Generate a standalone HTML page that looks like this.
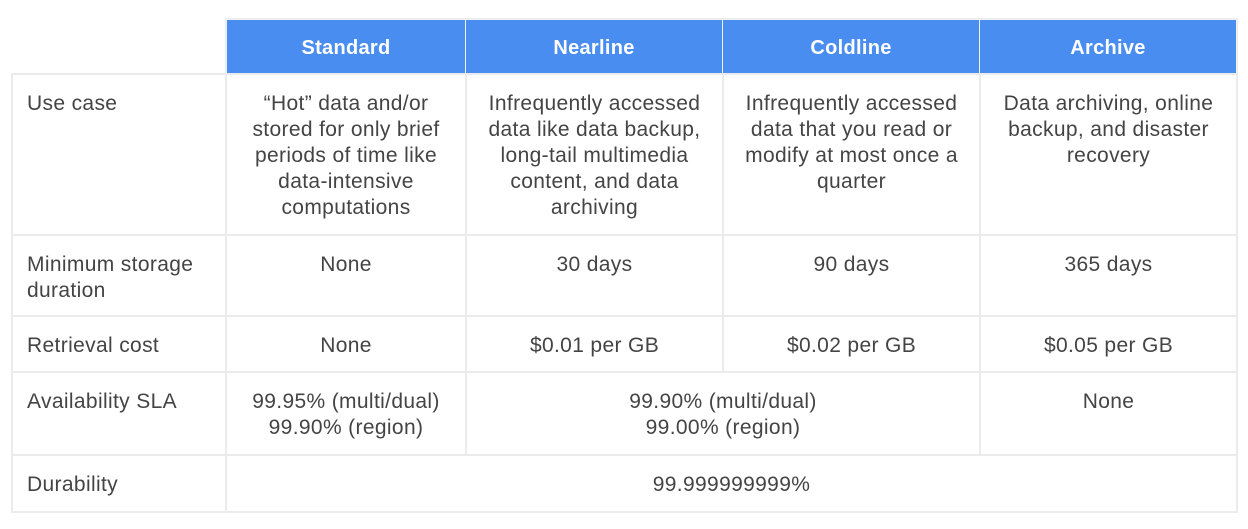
<!DOCTYPE html>
<html><head><style>
body{margin:0;width:1248px;height:529px;background:#fff;position:relative;overflow:hidden;font-family:"Liberation Sans",Arial,sans-serif;color:#444;}
.c{position:absolute;box-sizing:border-box;border:2px solid #ebebeb;font-size:21px;letter-spacing:0.35px;line-height:26px;padding-top:16px;text-align:center;}
.l{text-align:left;padding-left:14px;}
.h{position:absolute;box-sizing:border-box;background:#4a8df0;color:#fff;font-weight:bold;font-size:20px;letter-spacing:0.3px;text-align:center;line-height:56px;border:1px solid #f2f2f2;}
</style></head><body>
<div class="c" style="left:225px;top:18px;width:1013px;height:57px;padding:0"></div>
<div class="h" style="left:226px;top:19px;width:240px;height:55px">Standard</div>
<div class="h" style="left:465px;top:19px;width:258px;height:55px">Nearline</div>
<div class="h" style="left:722px;top:19px;width:258px;height:55px">Coldline</div>
<div class="h" style="left:979px;top:19px;width:258px;height:55px">Archive</div>

<div class="c l" style="left:11px;top:73px;width:216px;height:163px">Use case</div>
<div class="c" style="left:225px;top:73px;width:242px;height:163px">“Hot” data and/or<br>stored for only brief<br>periods of time like<br>data-intensive<br>computations</div>
<div class="c" style="left:465px;top:73px;width:259px;height:163px">Infrequently accessed<br>data like data backup,<br>long-tail multimedia<br>content, and data<br>archiving</div>
<div class="c" style="left:722px;top:73px;width:259px;height:163px">Infrequently accessed<br>data that you read or<br>modify at most once a<br>quarter</div>
<div class="c" style="left:979px;top:73px;width:259px;height:163px">Data archiving, online<br>backup, and disaster<br>recovery</div>

<div class="c l" style="left:11px;top:234px;width:216px;height:83px">Minimum storage<br>duration</div>
<div class="c" style="left:225px;top:234px;width:242px;height:83px">None</div>
<div class="c" style="left:465px;top:234px;width:259px;height:83px">30 days</div>
<div class="c" style="left:722px;top:234px;width:259px;height:83px">90 days</div>
<div class="c" style="left:979px;top:234px;width:259px;height:83px">365 days</div>

<div class="c l" style="left:11px;top:315px;width:216px;height:58px">Retrieval cost</div>
<div class="c" style="left:225px;top:315px;width:242px;height:58px">None</div>
<div class="c" style="left:465px;top:315px;width:259px;height:58px">$0.01 per GB</div>
<div class="c" style="left:722px;top:315px;width:259px;height:58px">$0.02 per GB</div>
<div class="c" style="left:979px;top:315px;width:259px;height:58px">$0.05 per GB</div>

<div class="c l" style="left:11px;top:371px;width:216px;height:85px">Availability SLA</div>
<div class="c" style="left:225px;top:371px;width:242px;height:85px">99.95% (multi/dual)<br>99.90% (region)</div>
<div class="c" style="left:465px;top:371px;width:516px;height:85px">99.90% (multi/dual)<br>99.00% (region)</div>
<div class="c" style="left:979px;top:371px;width:259px;height:85px">None</div>

<div class="c l" style="left:11px;top:454px;width:216px;height:59px">Durability</div>
<div class="c" style="left:225px;top:454px;width:1013px;height:59px">99.999999999%</div>
</body></html>
